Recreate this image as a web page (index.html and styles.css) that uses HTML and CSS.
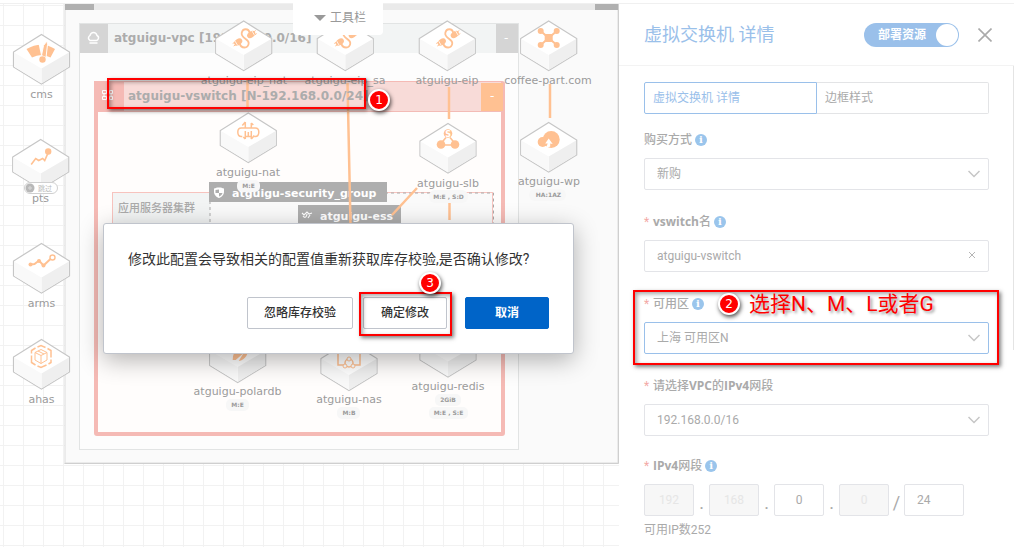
FILE: index.html
```html
<!DOCTYPE html>
<html lang="zh-CN">
<head>
<meta charset="utf-8">
<title>虚拟交换机 详情</title>
<link rel="stylesheet" href="styles.css">
</head>
<body>
<div class="app">
  <div class="topbar"></div>
  <div class="workspace">
    <main class="canvas">
      <svg class="diagram" width="100%" height="100%" role="img" aria-label="网络架构图">
        <defs>
          <pattern id="grid" x="3" y="5" width="20" height="20" patternUnits="userSpaceOnUse">
            <path d="M.5 0V20M0 .5H20" stroke="#f2f2f2" fill="none"/>
          </pattern>
          <g id="node">
            <path d="M0 0L28 17.500V32.500L0 49.500L-28 32.500V17.500Z" fill="#fff" stroke="#c6c6c6" stroke-width="1.200"/>
            <path d="M0 34L27.400 18V32.200L0 48.900Z" fill="#efefef" stroke="none"/>
            <path d="M0 34L-27.400 18V32.200L0 48.900Z" fill="#f9f9f9" stroke="none"/>
          </g>
          <g id="cable">
            <path d="M-4 22C-3 28 5 28 5 22C5 18 -3 17 -2 12C-1 7 5 7 6 12" fill="none" stroke="#ffc192" stroke-width="1.800"/>
            <g fill="#ffc192">
              <ellipse cx="-5.500" cy="21" rx="4.500" ry="3" transform="rotate(-35 -5.500 21)"/>
              <ellipse cx="7.500" cy="13.500" rx="4.500" ry="3" transform="rotate(-35 7.500 13.500)"/>
            </g>
            <path d="M-9 19.500L-6 24.500M8 9.500L11 14.500" stroke="#fff" stroke-width=".8"/>
            <path d="M-11 22.500L-8.500 21M-10 25L-7.500 23.500M10 11L12 9.500M11 14L13 12.500" stroke="#ffc192"/>
          </g>
        </defs>
        <g transform="translate(0 -4)">
          <rect x="0" y="4" width="100%" height="100%" fill="url(#grid)"/>

          <rect x="65" y="4" width="553" height="459" fill="#fafafa" stroke="#dcdcdc"/>
          <path d="M64.500 463.500H618.500V4" fill="none" stroke="#cfcfcf"/>
          <rect x="65" y="4" width="553" height="6" fill="#eaeaea"/>
          <path d="M65 4H94V10H65ZM595 4H618V10H595Z" fill="#b0b0b0"/>

          <rect x="79.500" y="23.500" width="439" height="426" fill="#fdfdfd" stroke="#e2e4e4"/>
          <rect x="80" y="24" width="438" height="29" fill="#f2f4f4"/>
          <path d="M80 24H108V53H80ZM496 24H518V53H496Z" fill="#d5d5d5"/>
          <path d="M90 40.500C86.500 38 90 35.500 90 35.500C91 31.500 96 31.500 97 35.500C100 37 98 40.500 96.500 40.500ZM89.500 43H97.500" fill="none" stroke="#fff" stroke-width="1.400"/>
          <text class="title" x="114" y="42">atguigu-vpc [192.168.0.0/16]</text>
          <text class="minus" x="504" y="42">-</text>

          <rect x="96" y="83" width="407" height="351" rx="1" fill="#fffdfc" stroke="#f5bab5" stroke-width="4"/>
          <rect x="98" y="82" width="403" height="29" fill="#f8dbd8"/>
          <path d="M94 111.500H505" stroke="#f3bbb6"/>
          <rect x="94" y="81" width="30" height="31" fill="#f5bab5"/>
          <rect x="481" y="83" width="22" height="28" fill="#ffc192"/>
          <path d="M102.500 90.500H106.500V93.500H102.500ZM109.500 90.500H112.500V93.500H109.500ZM102.500 96.500H106.500V99.500H102.500ZM109.500 96.500H112.500V99.500H109.500ZM104 94V96M111 94V96M107 92H109M107 98H109" fill="none" stroke="#fff"/>
          <text class="minus" x="490" y="100">-</text>

          <rect x="112.500" y="192.500" width="380" height="120" fill="#fafafa" stroke="#f7c3be"/>
          <rect x="113" y="193" width="97" height="40" fill="#f2f4f4"/>
          <path d="M210 240V193H493.500V240" fill="none" stroke="#aaa" stroke-dasharray="3 3"/>
          <text class="cluster" x="118" y="212">应用服务器集群</text>
          <rect x="209" y="182" width="178" height="20" fill="#aeaeae"/>
          <rect x="298" y="205" width="103" height="18" fill="#aeaeae"/>
          <path d="M219 187.500C221.500 187.500 222 188 224 188.500V192C224 195 221 197.500 219 198C217 197.500 214 195 214 192V188.500C216 188 216.500 187.500 219 187.500Z" fill="#fff"/>
          <path d="M219 189.500V193H215.500V190ZM219 193H222.500C222 195 220.500 196 219 196.500Z" fill="#aeaeae"/>
          <path d="M302 213L304 215L307 212L309 214L312 213M303 216C306 220 307 214 307 214M308 218L310 215" fill="none" stroke="#fff" stroke-width="1.200"/>
          <text class="group" x="232" y="197">atguigu-security_group</text>
          <text class="group" x="320" y="220">atguigu-ess</text>

          <path d="M247.500 80V107M347.500 83L350.500 224M449 87V119M550 84V118M449.500 203V220M417 188L392 215" fill="none" stroke="#ffc192" stroke-width="2.500"/>
          <text class="title" x="128" y="100">atguigu-vswitch [N-192.168.0.0/24]</text>

          <g transform="translate(41.500 34.500)"><use href="#node"/>
            <path d="M-15 14.500Q0 6 13.500 14.500L9 23Q0 18 -9.500 23Z" fill="#ffc192"/><path d="M-3 9L0 23L6 8Z" fill="#fff"/><path d="M5.500 6.500L6 10L4.500 23L0 21L2 11Z" fill="#ffc192" stroke="#fff"/><circle cx="1" cy="25" r="3.200" fill="#ffc192"/></g>
          <g transform="translate(40.700 139.500)"><use href="#node"/>
            <path d="M-9.500 25L-5 19L-2 21L2 19L4 21L8 12" fill="none" stroke="#ffc192" stroke-width="1.600"/><circle cx="7.500" cy="12" r="3.200" fill="#ffc192"/></g>
          <rect x="24.500" y="182.500" width="33" height="11" rx="5.500" fill="#fff" stroke="#d0d0d0"/><circle cx="30" cy="188" r="4.500" fill="#b8b8b8"/><circle cx="30" cy="188" r="1.200" fill="none" stroke="#ddd"/>
          <text class="skip" x="38" y="191">跳过</text>
          <g transform="translate(41.500 243.500)"><use href="#node"/>
            <path d="M-11 21L-7 20.500L-2.500 17L2 22L10 14.500" fill="none" stroke="#ffc192" stroke-width="2"/><circle cx="-11" cy="21" r="2" fill="#ffc192"/><circle cx="-2.500" cy="17.500" r="2" fill="#ffc192"/><circle cx="2" cy="22" r="2" fill="#ffc192"/><circle cx="11" cy="14" r="2.500" fill="#fff" stroke="#ffc192" stroke-width="1.400"/></g>
          <g transform="translate(41.500 339.500)"><use href="#node"/><g fill="none" stroke="#ffc192">
            <path d="M-6 8.500L-10 11V14M-10 16V23L-6 25.500M-4 26.500L-.5 28L5 25.500M9.500 20V23L7 24.500M9.500 18V11L6 9M4 8L-.5 6L-4 7.500" stroke-width="1.500"/><path d="M-.5 10L5.500 13V20.500L-.5 24L-6.500 20.500V13ZM-6.500 13L-.5 16L5.500 13M-.5 16V24M-3.500 11.500L2.500 14.500"/></g></g>

          <g transform="translate(243.700 21)"><use href="#node"/><use href="#cable"/></g>
          <g transform="translate(345.300 21)"><use href="#node"/><use href="#cable"/></g>
          <g transform="translate(447.300 21)"><use href="#node"/><use href="#cable"/></g>
          <g transform="translate(548.700 21)"><use href="#node"/>
            <path d="M-8 10L8 24M8 10L-8 24" stroke="#ffc192" stroke-width="2"/><rect x="-4" y="13" width="8" height="8" rx="1" fill="#ffc192"/><g fill="#ffc192"><circle cx="-8" cy="10" r="3"/><circle cx="8" cy="10" r="3"/><circle cx="-8" cy="24" r="3"/><circle cx="8" cy="24" r="3"/></g></g>
          <g transform="translate(248.300 113)"><use href="#node"/>
            <path d="M-6 23.500H-7Q-10.500 23.500 -10.500 19Q-10.500 15 -7 15H7Q10.500 15 10.500 19Q10.500 23.500 7 23.500H6M-3 23.500H3M-3 9V15M3 10V15M-3 18V26M3 18V26M0 19V23M-3 9L-6 12.500M3 26L6 22.500M3 10L5 12M-3 26L-5 24" fill="none" stroke="#ffc192" stroke-width="1.500"/></g>
          <g transform="translate(448 123.500)"><use href="#node"/>
            <path d="M-2 14L-7 20M2 14L7 20M-7 21.500H7" stroke="#ffc192" stroke-width="1.600"/><circle cy="10" r="4.300" fill="#ffc192"/><circle cx="-7" cy="21" r="4.300" fill="#ffc192"/><circle cx="7" cy="21" r="4.300" fill="#ffc192"/><text class="server" x="0" y="13">S</text></g>
          <g transform="translate(548.700 122.500)"><use href="#node"/>
            <circle cx="2.500" cy="17" r="8.500" fill="#ffc192"/><circle cx="-6" cy="19.500" r="5" fill="#ffc192"/><path d="M0 16L4 21.500L1.500 21V24L-3 26L-1 21H-3.500Z" fill="#fff"/></g>
          <g transform="translate(237.700 333)"><use href="#node"/><path d="M-5 27C-5 17 2 12 11 12C11 21 8 27 1 28L6 20L-2 27Z" fill="#ffc192"/></g>
          <g transform="translate(349 341)"><use href="#node"/><g fill="none" stroke="#ffc192" stroke-width="1.500"><path d="M-5 24H-11V10H11V24H5"/><circle cy="22" r="4"/></g><g fill="#fff" stroke="#ffc192"><circle cy="18" r="2"/><circle cx="-4" cy="25" r="2"/><circle cx="4" cy="25" r="2"/></g></g>
          <g transform="translate(448 327.500)"><use href="#node"/></g>

          <g class="name">
            <text x="41.500" y="98">cms</text><text x="40.500" y="202">pts</text><text x="41.500" y="307">arms</text><text x="41.500" y="403">ahas</text>
            <text x="244" y="84">atguigu-eip_nat</text><text x="345" y="84">atguigu-eip_sa</text><text x="447" y="84">atguigu-eip</text><text x="548" y="84">coffee-part.com</text>
            <text x="248" y="176">atguigu-nat</text><text x="448" y="187">atguigu-slb</text><text x="549" y="185">atguigu-wp</text>
            <text x="237.500" y="395">atguigu-polardb</text><text x="349" y="403">atguigu-nas</text><text x="448" y="390">atguigu-redis</text>
          </g>
          <g fill="#f7f7f7">
            <rect x="237" y="180" width="23" height="12" rx="5"/><rect x="429" y="190" width="39" height="13" rx="6"/><rect x="529" y="189" width="37" height="12" rx="6"/>
            <rect x="226" y="399" width="23" height="12" rx="5"/><rect x="337" y="407" width="23" height="12" rx="5"/><rect x="435" y="394" width="26" height="12" rx="5"/><rect x="429" y="407" width="39" height="12" rx="5"/>
          </g>
          <g class="tag">
            <text x="248.500" y="188">M:E</text><text x="448.500" y="199">M:E , S:D</text><text x="548.500" y="197">HA:1AZ</text>
            <text x="237.500" y="407">M:E</text><text x="349" y="415">M:B</text><text x="448" y="402">2GiB</text><text x="448.500" y="415">M:E , S:E</text>
          </g>
        </g>
      </svg>

      <button class="toolbar-tab" type="button"><span class="caret"></span>工具栏</button>
      <span class="mark mark-vswitch"></span>
      <span class="badge badge-one">1</span>

      <div class="dialog" role="dialog" aria-labelledby="dialog-text">
        <p class="dialog-text" id="dialog-text">修改此配置会导致相关的配置值重新获取库存校验,是否确认修改?</p>
        <div class="dialog-actions">
          <button class="btn btn-wide" type="button">忽略库存校验</button>
          <div class="confirm">
            <button class="btn" type="button">确定修改</button>
            <span class="mark mark-confirm"></span>
            <span class="badge badge-three">3</span>
          </div>
          <button class="btn btn-primary" type="button">取消</button>
        </div>
      </div>
    </main>

    <aside class="panel">
      <header class="panel-header">
        <h1 class="panel-title">虚拟交换机 详情</h1>
        <label class="switch"><input type="checkbox" role="switch" checked><span>部署资源</span><i class="knob"></i></label>
        <button class="close" type="button" aria-label="关闭"><svg width="14" height="14"><path d="M.5 .5L13.500 13.500M13.500 .5L.5 13.500" stroke="#aaa" stroke-width="1.600"/></svg></button>
      </header>
      <form class="panel-body">
        <div class="tabs">
          <button class="tab tab-active" type="button">虚拟交换机 详情</button>
          <button class="tab" type="button">边框样式</button>
        </div>
        <div class="field">
          <div class="field-label"><label for="pay">购买方式</label><i class="info">i</i></div>
          <div class="control"><select id="pay"><option>新购</option></select><svg class="chevron" width="12" height="8"><path d="M.5 1L6 6.500L11.500 1"/></svg></div>
        </div>
        <div class="field">
          <div class="field-label"><span class="required">*</span><label for="vsw"><b>vswitch</b>名</label><i class="info">i</i></div>
          <div class="control"><input id="vsw" type="text" value="atguigu-vswitch"><button class="clear" type="button" aria-label="清除"><svg width="6" height="6"><path d="M0 0L6 6M6 0L0 6"/></svg></button></div>
        </div>
        <div class="field">
          <div class="field-label"><span class="required">*</span><label for="zone">可用区</label><i class="info">i</i></div>
          <div class="control"><select id="zone" class="focused"><option>上海 可用区N</option></select><svg class="chevron" width="12" height="8"><path d="M.5 1L6 6.500L11.500 1"/></svg></div>
          <span class="mark mark-zone"></span>
          <span class="badge badge-two">2</span>
          <span class="note">选择N、M、L或者G</span>
        </div>
        <div class="field field-tight">
          <div class="field-label"><span class="required">*</span><label for="cidr">请选择<b>VPC</b>的<b>IPv4</b>网段</label></div>
          <div class="control"><select id="cidr"><option>192.168.0.0/16</option></select><svg class="chevron" width="12" height="8"><path d="M.5 1L6 6.500L11.500 1"/></svg></div>
        </div>
        <div class="field">
          <div class="field-label"><span class="required">*</span><label for="ip3"><b>IPv4</b>网段</label><i class="info">i</i></div>
          <div class="octets">
            <input type="text" value="192" disabled aria-label="第一段"><span class="dot">.</span>
            <input type="text" value="168" disabled aria-label="第二段"><span class="dot">.</span>
            <input type="text" value="0" id="ip3"><span class="dot">.</span>
            <input type="text" value="0" disabled aria-label="第四段"><span class="dot">/</span>
            <input class="mask" type="text" value="24" aria-label="掩码">
          </div>
          <p class="hint">可用IP数252</p>
        </div>
      </form>
    </aside>
  </div>
</div>
</body>
</html>
```
FILE: styles.css
```css
* { box-sizing: border-box; }
body {
  margin: 0;
  color: #aaa;
  background: #fff;
  font: 12px/18px Roboto, "Noto Sans CJK SC", sans-serif;
}
button, input, select { font: inherit; color: inherit; margin: 0; }
button { cursor: pointer; }
p, h1 { margin: 0; font-weight: 400; }

.app { display: flex; flex-direction: column; height: 100vh; overflow: hidden; }
.topbar { flex: none; height: 4px; border-bottom: 1px solid #f0f0f0; }
.workspace { flex: 1; display: flex; min-height: 0; }

/* Diagram canvas */
.canvas { position: relative; flex: 1; min-width: 0; }
.diagram { display: block; }
.diagram text { font-family: "DejaVu Sans", "Noto Sans CJK SC", sans-serif; fill: #9b9b9b; }
.diagram .title { font-size: 12px; font-weight: 700; fill: #acacac; }
.diagram .minus { font-size: 12px; fill: #fff; }
.diagram .cluster { font: 500 11px "Noto Sans CJK SC", sans-serif; fill: #aaa; }
.diagram .group { font-size: 11px; font-weight: 700; fill: #fff; }
.diagram .skip { font-size: 7px; fill: #bbb; }
.diagram .name text { font-size: 11px; text-anchor: middle; }
.diagram .tag text { font-size: 6px; font-weight: 700; text-anchor: middle; }
.diagram .server { font-size: 8px; font-weight: 700; fill: #fff; text-anchor: middle; }

.toolbar-tab {
  position: absolute; top: -4px; left: 293px;
  display: flex; align-items: center; justify-content: center; gap: 4px;
  width: 90px; height: 35px; padding: 0 0 0 4px;
  border: 0; border-radius: 4px; background: #fff; color: #999;
}
.caret { border: 6px solid transparent; border-top-color: #999; border-bottom: 0; }

/* Annotations */
.mark {
  position: absolute; pointer-events: none;
  border: 2px solid #f00;
  box-shadow: 2px 2px 4px rgba(0, 0, 0, .5), inset 2px 2px 4px rgba(0, 0, 0, .35);
}
.badge {
  position: absolute;
  display: flex; align-items: center; justify-content: center;
  width: 22px; height: 22px;
  border: 2px solid #fff; border-radius: 50%;
  background: #f00; color: #fff;
  font: 12px/18px "DejaVu Sans", sans-serif;
  box-shadow: 1px 2px 4px rgba(0, 0, 0, .7);
}
.mark-vswitch { left: 107px; top: 74px; width: 259px; height: 31px; }
.badge-one { left: 368px; top: 85px; }
.mark-confirm { left: -4px; top: -5px; width: 93px; height: 44px; }
.badge-three { left: 56px; top: -25px; }
.mark-zone { left: -11px; right: -10px; top: -2px; height: 75px; }
.badge-two { left: 74px; top: 1px; }
.note {
  position: absolute; left: 105px; top: 0;
  color: #f00; font-size: 21px; line-height: 24px; white-space: nowrap;
  text-shadow: 2px 2px 3px rgba(0, 0, 0, .4);
}

/* Dialog */
.dialog {
  position: absolute; left: 103px; top: 219px;
  width: 471px; padding: 24px;
  border: 1px solid #c0c4cc; border-radius: 3px;
  background: #fff; color: #333;
  box-shadow: 0 6px 24px rgba(0, 0, 0, .3);
}
.dialog-text { font-size: 14px; line-height: 22px; white-space: nowrap; }
.dialog-actions { display: flex; justify-content: flex-end; gap: 10px; padding-top: 27px; }
.btn {
  width: 84px; height: 32px; padding: 0;
  border: 1px solid #c0c4cc; border-radius: 2px;
  background: #fff; color: #333; font-weight: 500;
}
.btn-wide { width: 106px; }
.btn-primary { border-color: #0064c8; background: #0064c8; color: #fff; font-weight: 700; }
.confirm { position: relative; margin-right: 8px; }

/* Detail panel */
.panel { flex: none; width: 395px; background: #fff; }
.panel-header {
  display: flex; align-items: center;
  height: 62px; padding: 0 22px 0 25px;
  border-bottom: 1px solid #f3f3f3;
}
.panel-title { flex: 1; color: #9ac0ea; font-size: 18px; line-height: 26px; }
.switch {
  position: relative; display: flex; align-items: center;
  width: 95px; height: 24px; padding-left: 14px;
  border-radius: 12px; background: #9ac0ea; color: #fff; font-weight: 700;
}
.switch input { position: absolute; opacity: 0; }
.knob { width: 22px; height: 22px; margin: 0 1px 0 auto; border-radius: 50%; background: #fff; }
.close { display: flex; margin-left: 19px; padding: 0; border: 0; background: none; }
.panel-body {
  padding: 16px 25px 0;
  background: linear-gradient(#e4e4e4, #e4e4e4) right top / 1px 284px no-repeat;
}
.tabs { display: flex; margin-bottom: 14px; }
.tab {
  flex: 1; height: 32px; padding: 0 8px; text-align: left;
  border: 1px solid #e3e4e6; border-left: 0; border-radius: 0 2px 2px 0; background: #fff;
}
.tab-active { border: 1px solid #9ac0ea; border-radius: 2px 0 0 2px; color: #9ac0ea; }
.field { position: relative; margin-bottom: 20px; }
.field-tight { margin-bottom: 18px; }
.field-label { display: flex; align-items: center; height: 24px; margin-bottom: 6px; }
.field-label label { font-weight: 500; }
.field-label b { font-family: "Open Sans", sans-serif; font-weight: 700; }
.required { width: 9px; color: #f3a9a5; }
.info {
  width: 12px; height: 12px; margin-left: 3px; border-radius: 50%;
  background: #9ac5ec; color: #fff; text-align: center;
  font: 700 10px/12px "DejaVu Serif", serif;
}
.control { position: relative; display: flex; }
.control select, .control input, .octets input {
  width: 100%; height: 32px; padding: 0 12px;
  border: 1px solid #e3e4e8; border-radius: 2px;
  background: #fff; appearance: none; outline: 0;
}
.control .focused { border-color: #9ac0ea; }
.chevron { position: absolute; right: 9px; top: 12px; fill: none; stroke: #c6c6c6; stroke-width: 1.5; pointer-events: none; }
.clear { position: absolute; right: 14px; top: 12px; display: flex; padding: 0; border: 0; background: none; stroke: #b5b5b5; }
.octets { display: flex; }
.octets input { width: 50px; padding: 0; text-align: center; }
.octets input:disabled { background: #f7f7f7; color: #e6e6e6; }
.octets .mask { width: 60px; padding: 0 12px; text-align: left; }
.dot { width: 15px; text-align: center; font-size: 18px; line-height: 38px; height: 32px; }
.hint { padding-top: 5px; }
```
